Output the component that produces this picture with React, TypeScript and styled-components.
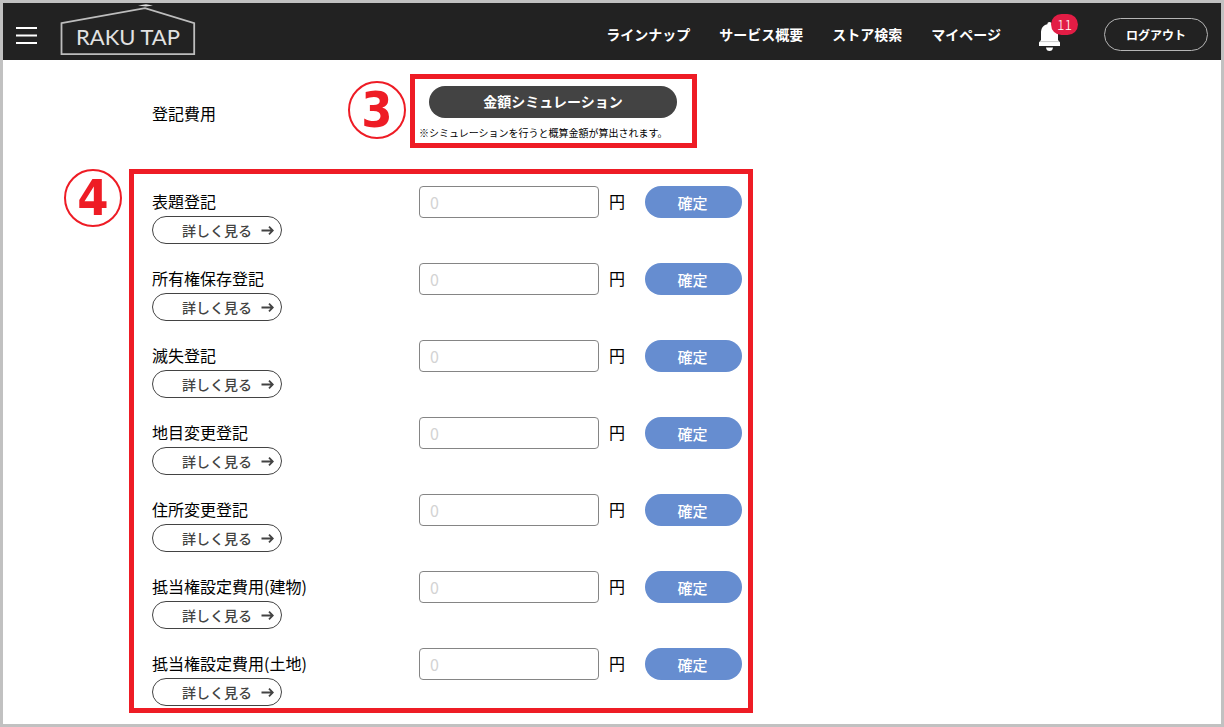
import React from "react";
import styled, { createGlobalStyle } from "styled-components";

const red = "#ee1c25";

const GlobalStyle = createGlobalStyle`
  *, *::before, *::after { box-sizing: border-box; }
  body {
    margin: 0;
    background: #fff;
    color: #000;
    font-family: "Noto Sans CJK JP", "Noto Sans", sans-serif;
    font-size: 16px;
  }
  button, input { font-family: inherit; }
`;

const Page = styled.div`
  min-height: 100vh;
  border: 3px solid #c1c1c1;
`;

const Header = styled.header`
  display: flex;
  align-items: center;
  height: 57px;
  padding: 0 13px;
  background: #222;
  color: #fff;
`;

const MenuButton = styled.button`
  display: flex;
  padding: 0;
  margin: 8px 23px 0 0;
  border: 0;
  background: none;
`;

const Logo = styled.a`
  position: relative;
  display: flex;
  justify-content: center;
  width: 136px;
  height: 49px;
  padding-top: 16px;
  color: #e2e2e2;
  font: 400 22px/28px Lato, sans-serif;
  text-decoration: none;
  svg {
    position: absolute;
    inset: 0;
  }
`;

const Nav = styled.nav`
  display: flex;
  gap: 29px;
  margin-left: auto;
  padding-top: 4px;
`;

const NavLink = styled.a`
  color: #fff;
  font-size: 14px;
  line-height: 20px;
  font-weight: 700;
  text-decoration: none;
  white-space: nowrap;
`;

const BellButton = styled.button`
  position: relative;
  display: flex;
  width: 24px;
  height: 30px;
  margin: 10px 42px 0 37px;
  padding: 0;
  border: 0;
  background: none;
`;

const Badge = styled.span`
  position: absolute;
  top: -8px;
  left: 13px;
  width: 27px;
  height: 21px;
  border-radius: 11px;
  background: #e21d45;
  color: #fff;
  font-size: 14px;
  line-height: 21px;
  font-weight: 300;
  text-align: center;
`;

const LogoutButton = styled.button`
  width: 104px;
  height: 33px;
  margin-top: 6px;
  padding: 0;
  border: 1px solid #b5b5b5;
  border-radius: 17px;
  background: none;
  color: #fff;
  font-size: 12px;
  font-weight: 700;
`;

const Main = styled.main`
  padding: 14px 20px 11px 126px;
`;

const CostSection = styled.section`
  display: flex;
  align-items: flex-start;
  margin-bottom: 21px;
  padding-left: 23px;
`;

const CostTitle = styled.h1`
  width: 258px;
  margin: 0;
  padding-top: 27px;
  font-size: 16px;
  line-height: 24px;
  font-weight: 400;
`;

const Highlight = styled.div`
  position: relative;
  border: 5px solid ${red};
`;

const SimulationBox = styled(Highlight)`
  width: 287px;
  padding: 7px 4px 3px;
`;

const FeeBox = styled(Highlight)`
  max-width: 624px;
  padding: 12px 6px 2px 18px;
`;

const StepNumber = styled.span<{ $top: number; $gap: number }>`
  position: absolute;
  top: ${(p) => p.$top}px;
  right: 100%;
  display: flex;
  align-items: center;
  justify-content: center;
  width: 58px;
  height: 58px;
  margin-right: ${(p) => p.$gap}px;
  border: 2px solid ${red};
  border-radius: 50%;
  color: ${red};
  font: 700 50px/52px "DejaVu Sans Condensed", "Noto Sans", sans-serif;
`;

const SimulationButton = styled.button`
  display: block;
  width: 248px;
  height: 32px;
  margin: 0 10px 8px;
  padding: 0 0 2px;
  border: 0;
  border-radius: 16px;
  background: #434343;
  color: #fff;
  font-size: 14px;
  font-weight: 700;
`;

const Note = styled.p`
  margin: 0;
  font-size: 10px;
  line-height: 14px;
  white-space: nowrap;
`;

const FeeList = styled.ul`
  display: grid;
  gap: 19px;
  margin: 0;
  padding: 0;
  list-style: none;
`;

const FeeRow = styled.li`
  display: flex;
  align-items: flex-start;
`;

const FeeName = styled.div`
  flex: 1;
`;

const FeeLabel = styled.label`
  display: block;
  font-size: 16px;
  line-height: 30px;
`;

const DetailButton = styled.button`
  display: flex;
  align-items: center;
  justify-content: flex-end;
  gap: 9px;
  width: 130px;
  height: 28px;
  padding: 0 7px 0 0;
  border: 1px solid #434343;
  border-radius: 14px;
  background: #fff;
  color: #434343;
  font-size: 14px;
  font-weight: 500;
`;

const FeeInput = styled.input`
  width: 180px;
  height: 32px;
  padding: 0 10px;
  border: 1px solid #858585;
  border-radius: 4px;
  background: #fff;
  font-size: 16px;
  &::placeholder {
    color: #d3d3d3;
    opacity: 1;
  }
`;

const Unit = styled.span`
  margin: 0 20px 0 10px;
  line-height: 30px;
`;

const ConfirmButton = styled.button`
  width: 97px;
  height: 32px;
  padding: 0 2px 0 0;
  border: 0;
  border-radius: 16px;
  background: #668dd0;
  color: #fff;
  font-size: 15px;
  font-weight: 500;
`;

const navItems = ["ラインナップ", "サービス概要", "ストア検索", "マイページ"];

const fees = [
  "表題登記",
  "所有権保存登記",
  "滅失登記",
  "地目変更登記",
  "住所変更登記",
  "抵当権設定費用(建物)",
  "抵当権設定費用(土地)",
];

const MenuIcon = () => (
  <svg width="21" height="17" viewBox="0 0 21 17" stroke="#fff" strokeWidth="2" aria-hidden="true">
    <path d="M0 1H21M0 8.5H21M0 16H21" />
  </svg>
);

const HouseOutline = () => (
  <svg width="136" height="49" viewBox="0 0 136 49" fill="none" overflow="visible" aria-hidden="true">
    <path d="M1.5 16.2L85 1.2L134.2 16.2V47.2H1.5Z" stroke="#bdbdbd" strokeWidth="1.8" />
    <path d="M78 -1.5L86 -2.8L93 -1.5L86 -0.6Z" fill="#ddd" />
  </svg>
);

const BellIcon = () => (
  <svg width="24" height="30" viewBox="0 0 24 30" fill="#fff" aria-hidden="true">
    <path d="M9.3 2.2Q9.3 0 11.5 0T13.7 2.2C18.6 3.3 20 7 20 11V18L22 20.5V24H1V20.5L3 18V11C3 7 4.4 3.3 9.3 2.2Z" />
    <path d="M2 19.6H21" stroke="#bbb" strokeWidth="0.8" />
    <path d="M8 25.5H15Q14.6 29 11.5 29T8 25.5Z" />
  </svg>
);

const ArrowIcon = () => (
  <svg width="13" height="10" viewBox="0 0 13 10" fill="none" stroke="#434343" strokeWidth="1.8" aria-hidden="true">
    <path d="M0.5 5.5H11.5M8 1.7L11.8 5.5L8 9.3" />
  </svg>
);

export default function App() {
  return (
    <Page>
      <GlobalStyle />
      <Header>
        <MenuButton type="button" aria-label="メニュー">
          <MenuIcon />
        </MenuButton>
        <Logo href="#">
          <HouseOutline />
          RAKU TAP
        </Logo>
        <Nav>
          {navItems.map((item) => (
            <NavLink key={item} href="#">
              {item}
            </NavLink>
          ))}
        </Nav>
        <BellButton type="button" aria-label="お知らせ">
          <BellIcon />
          <Badge>11</Badge>
        </BellButton>
        <LogoutButton type="button">ログアウト</LogoutButton>
      </Header>
      <Main>
        <CostSection>
          <CostTitle>登記費用</CostTitle>
          <SimulationBox>
            <StepNumber $top={2} $gap={9}>3</StepNumber>
            <SimulationButton type="button">金額シミュレーション</SimulationButton>
            <Note>※シミュレーションを行うと概算金額が算出されます。</Note>
          </SimulationBox>
        </CostSection>
        <FeeBox>
          <StepNumber $top={-5} $gap={12}>4</StepNumber>
          <FeeList>
            {fees.map((fee, i) => (
              <FeeRow key={fee}>
                <FeeName>
                  <FeeLabel htmlFor={`fee-${i}`}>{fee}</FeeLabel>
                  <DetailButton type="button">
                    詳しく見る
                    <ArrowIcon />
                  </DetailButton>
                </FeeName>
                <FeeInput id={`fee-${i}`} type="text" inputMode="numeric" placeholder="0" />
                <Unit>円</Unit>
                <ConfirmButton type="button">確定</ConfirmButton>
              </FeeRow>
            ))}
          </FeeList>
        </FeeBox>
      </Main>
    </Page>
  );
}
